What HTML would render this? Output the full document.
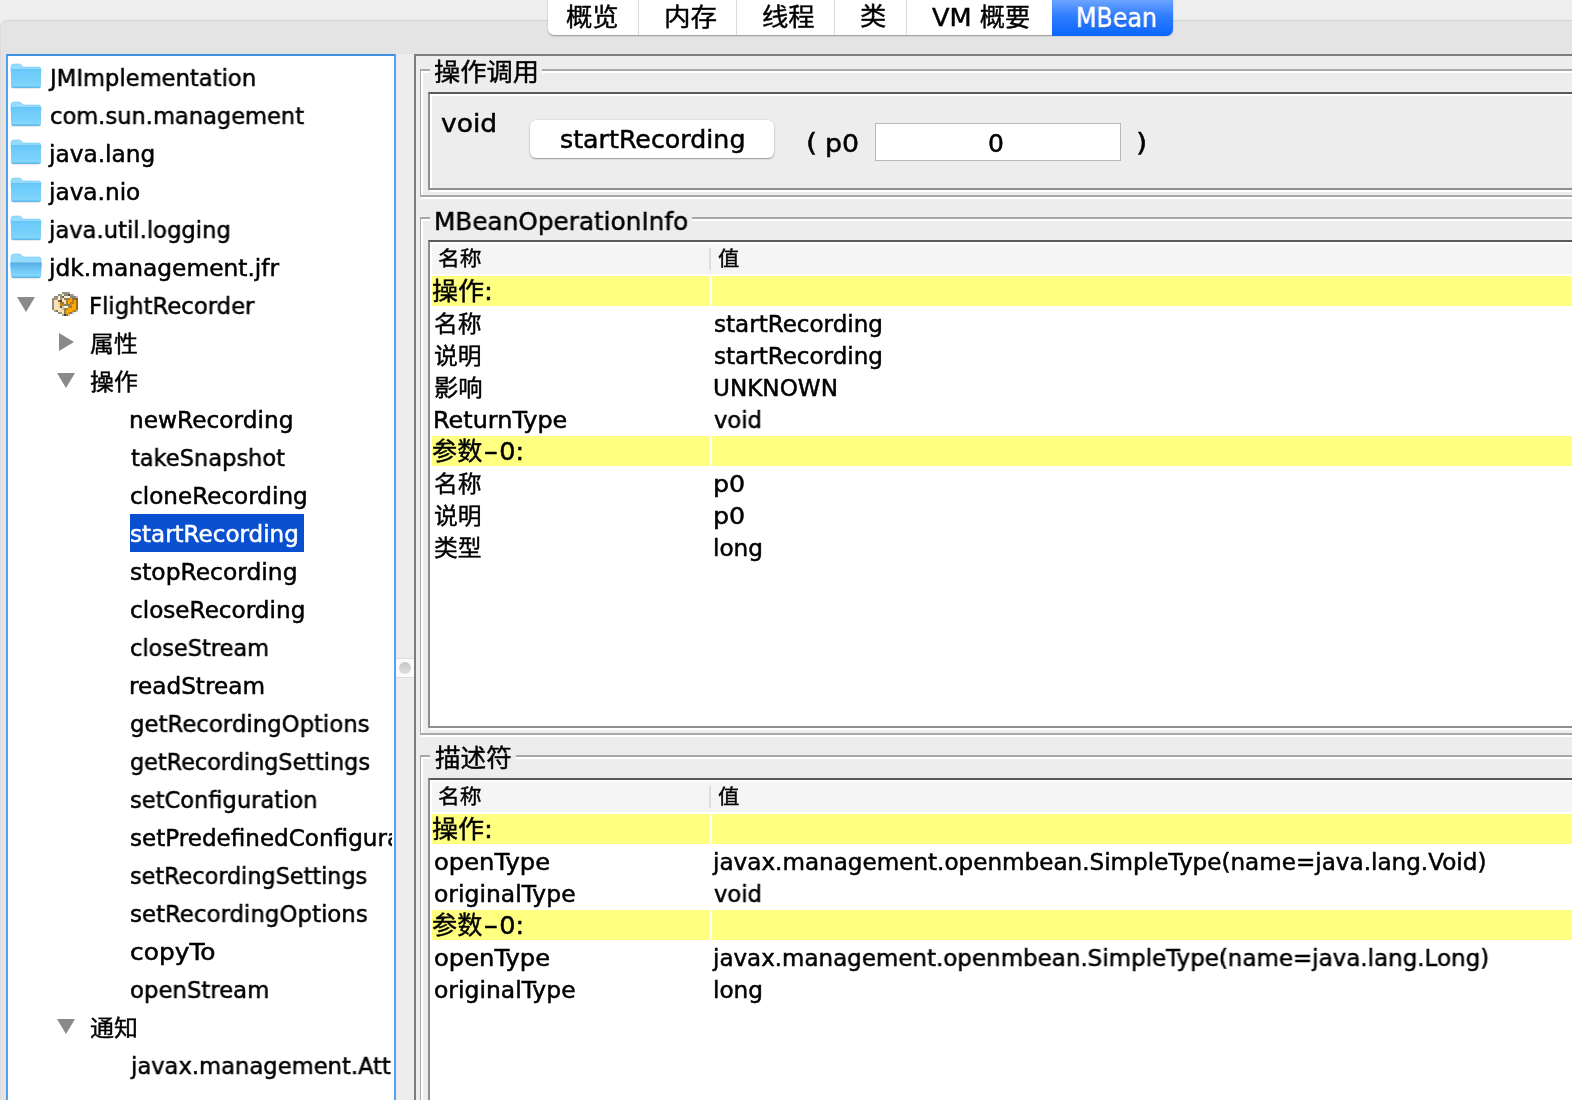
<!DOCTYPE html>
<html lang="zh-CN"><head><meta charset="utf-8"><title>JConsole MBean</title>
<style>
*{box-sizing:border-box;margin:0;padding:0}
html,body{width:1572px;height:1100px;overflow:hidden;background:#eeeeee}
body{position:relative;font-family:"DejaVu Sans", "Liberation Sans", "Noto Sans CJK SC", sans-serif;font-size:23px;color:#000;line-height:1;-webkit-text-stroke:0.5px currentColor}
.a{position:absolute}
.t{position:absolute;white-space:nowrap;will-change:transform;transform-origin:0 0}
.r{height:38px;line-height:38px}
.c{height:32px;line-height:32px}
.tb{height:36px;line-height:36px}
.b{font-size:25px}
.mb{font-size:26.5px}
.h{font-size:21px}
.w{color:#fff}
.d{display:inline-block;transform:scaleX(1.6);margin:0 3.5px 0 4px}
.sh{text-shadow:0 1px 1px rgba(0,0,40,.35)}
.k{font-size:0.985em;-webkit-text-stroke:0.4px currentColor}
.pane{left:0;top:20px;width:1600px;height:1200px;background:#e4e4e4;border:1px solid #d4d4d4;border-left-color:#dcdcdc;border-radius:7px}
.tabs{left:548px;top:-10px;width:625px;height:45px;background:#fff;border-radius:6px;box-shadow:0 1px 1.5px rgba(0,0,0,.35);overflow:hidden}
.tab{position:absolute;top:0;height:46px;border-left:1px solid #dcdcdc}
.sel{background:linear-gradient(#6ba4ff 10px,#2f7dff 26px,#0a66fb 46px);border-radius:0 0 7px 0}
.tree{left:6px;top:54px;width:390px;height:1100px;background:#fff;border:2px solid #55a2ea;border-top-color:#3f91de}
.clip{left:0;top:0;width:384px;height:1100px;overflow:hidden}
.sel2{background:#0950d0}
.div{left:396px;top:54px;width:18px;height:1100px;background:#ededed}
.right{left:414px;top:54px;width:1300px;height:1100px;background:#ededed;border:2px solid #7d7d7d}
.gw{border:2px solid #fff}
.gg{border:solid #a8a8a8;border-width:2px 0 2px 1px}
.gb{position:absolute;background:#ededed;height:6px}
.bw{border:2px solid #fff}
.bx{border:2px solid #8e8e8e;border-top-color:#5a5a5a}
.hdr{background:#f5f5f5}
.y{background:#ffff80}
</style></head>
<body>
<div class="a pane"></div>
<div class="a tabs"><div class="tab" style="left:0px;width:90px;border-left:0;"></div><div class="tab" style="left:90px;width:98px;"></div><div class="tab" style="left:188px;width:98px;"></div><div class="tab" style="left:286px;width:72px;"></div><div class="tab" style="left:358px;width:146px;"></div></div>
<div class="a sel" style="left:1052px;top:-10px;width:121px;height:46px"></div>
<div class="a tree"><div class="a clip">
<svg class="a" style="left:2px;top:7px" width="32" height="27" viewBox="0 0 32 27"><defs><linearGradient id="fg0" x1="0" y1="0" x2="0" y2="1"><stop offset="0" stop-color="#62c2f5"/><stop offset=".08" stop-color="#6bc9f8"/><stop offset=".8" stop-color="#7cd3fb"/><stop offset=".84" stop-color="#90dbfd"/><stop offset=".9" stop-color="#72ccf8"/><stop offset="1" stop-color="#5ab4e6"/></linearGradient></defs><path d="M1 4 Q1 1 4 1 H9 Q10.6 1 11.6 2.2 L13 4 H28.5 Q31 4 31 6.5 V10 H1 Z" fill="#96dbfd" stroke="#74c9f5" stroke-width=".6"/><path d="M1 6.6 Q1 6 1.6 6 H30.4 Q31 6 31 6.6 V23 Q31 25 29 25 H3 Q1 25 1 23 Z" fill="url(#fg0)"/><path d="M2.5 25.6 H29.5" stroke="#000" stroke-opacity=".1" stroke-width="1"/></svg>
<svg class="a" style="left:2px;top:45px" width="32" height="27" viewBox="0 0 32 27"><defs><linearGradient id="fg1" x1="0" y1="0" x2="0" y2="1"><stop offset="0" stop-color="#62c2f5"/><stop offset=".08" stop-color="#6bc9f8"/><stop offset=".8" stop-color="#7cd3fb"/><stop offset=".84" stop-color="#90dbfd"/><stop offset=".9" stop-color="#72ccf8"/><stop offset="1" stop-color="#5ab4e6"/></linearGradient></defs><path d="M1 4 Q1 1 4 1 H9 Q10.6 1 11.6 2.2 L13 4 H28.5 Q31 4 31 6.5 V10 H1 Z" fill="#96dbfd" stroke="#74c9f5" stroke-width=".6"/><path d="M1 6.6 Q1 6 1.6 6 H30.4 Q31 6 31 6.6 V23 Q31 25 29 25 H3 Q1 25 1 23 Z" fill="url(#fg1)"/><path d="M2.5 25.6 H29.5" stroke="#000" stroke-opacity=".1" stroke-width="1"/></svg>
<svg class="a" style="left:2px;top:83px" width="32" height="27" viewBox="0 0 32 27"><defs><linearGradient id="fg2" x1="0" y1="0" x2="0" y2="1"><stop offset="0" stop-color="#62c2f5"/><stop offset=".08" stop-color="#6bc9f8"/><stop offset=".8" stop-color="#7cd3fb"/><stop offset=".84" stop-color="#90dbfd"/><stop offset=".9" stop-color="#72ccf8"/><stop offset="1" stop-color="#5ab4e6"/></linearGradient></defs><path d="M1 4 Q1 1 4 1 H9 Q10.6 1 11.6 2.2 L13 4 H28.5 Q31 4 31 6.5 V10 H1 Z" fill="#96dbfd" stroke="#74c9f5" stroke-width=".6"/><path d="M1 6.6 Q1 6 1.6 6 H30.4 Q31 6 31 6.6 V23 Q31 25 29 25 H3 Q1 25 1 23 Z" fill="url(#fg2)"/><path d="M2.5 25.6 H29.5" stroke="#000" stroke-opacity=".1" stroke-width="1"/></svg>
<svg class="a" style="left:2px;top:121px" width="32" height="27" viewBox="0 0 32 27"><defs><linearGradient id="fg3" x1="0" y1="0" x2="0" y2="1"><stop offset="0" stop-color="#62c2f5"/><stop offset=".08" stop-color="#6bc9f8"/><stop offset=".8" stop-color="#7cd3fb"/><stop offset=".84" stop-color="#90dbfd"/><stop offset=".9" stop-color="#72ccf8"/><stop offset="1" stop-color="#5ab4e6"/></linearGradient></defs><path d="M1 4 Q1 1 4 1 H9 Q10.6 1 11.6 2.2 L13 4 H28.5 Q31 4 31 6.5 V10 H1 Z" fill="#96dbfd" stroke="#74c9f5" stroke-width=".6"/><path d="M1 6.6 Q1 6 1.6 6 H30.4 Q31 6 31 6.6 V23 Q31 25 29 25 H3 Q1 25 1 23 Z" fill="url(#fg3)"/><path d="M2.5 25.6 H29.5" stroke="#000" stroke-opacity=".1" stroke-width="1"/></svg>
<svg class="a" style="left:2px;top:159px" width="32" height="27" viewBox="0 0 32 27"><defs><linearGradient id="fg4" x1="0" y1="0" x2="0" y2="1"><stop offset="0" stop-color="#62c2f5"/><stop offset=".08" stop-color="#6bc9f8"/><stop offset=".8" stop-color="#7cd3fb"/><stop offset=".84" stop-color="#90dbfd"/><stop offset=".9" stop-color="#72ccf8"/><stop offset="1" stop-color="#5ab4e6"/></linearGradient></defs><path d="M1 4 Q1 1 4 1 H9 Q10.6 1 11.6 2.2 L13 4 H28.5 Q31 4 31 6.5 V10 H1 Z" fill="#96dbfd" stroke="#74c9f5" stroke-width=".6"/><path d="M1 6.6 Q1 6 1.6 6 H30.4 Q31 6 31 6.6 V23 Q31 25 29 25 H3 Q1 25 1 23 Z" fill="url(#fg4)"/><path d="M2.5 25.6 H29.5" stroke="#000" stroke-opacity=".1" stroke-width="1"/></svg>
<svg class="a" style="left:2px;top:197px" width="32" height="27" viewBox="0 0 32 27"><defs><linearGradient id="fg5" x1="0" y1="0" x2="0" y2="1"><stop offset="0" stop-color="#57abdf"/><stop offset=".35" stop-color="#68c2f2"/><stop offset=".75" stop-color="#7cd3fb"/><stop offset=".8" stop-color="#8edafd"/><stop offset=".88" stop-color="#72ccf8"/><stop offset="1" stop-color="#5ab4e6"/></linearGradient></defs><path d="M1 4 Q1 1 4 1 H9 Q10.6 1 11.6 2.2 L13 4 H28.5 Q31 4 31 6.5 V14 H1 Z" fill="#96dbfd" stroke="#74c9f5" stroke-width=".6"/><path d="M0.2 10.4 Q0.1 9.4 1.1 9.4 H30.9 Q31.9 9.4 31.8 10.4 L31 23 Q31 25 29 25 H3 Q1 25 1 23 Z" fill="url(#fg5)"/><path d="M2.5 25.6 H29.5" stroke="#000" stroke-opacity=".1" stroke-width="1"/></svg>
<svg class="a" style="left:9px;top:241px" width="18" height="15" viewBox="0 0 18 15"><path d="M0 0 H18 L9 15 Z" fill="#8a8a8a"/></svg>
<svg class="a" style="left:44px;top:236px" width="26" height="24" viewBox="0 0 26 24" shape-rendering="crispEdges"><rect x="10" y="0" width="2" height="2" fill="#9a9486"/><rect x="12" y="0" width="2" height="2" fill="#9a9486"/><rect x="14" y="0" width="2" height="2" fill="#9a9486"/><rect x="16" y="0" width="2" height="2" fill="#a8a49a"/><rect x="6" y="2" width="2" height="2" fill="#8f8f8f"/><rect x="8" y="2" width="2" height="2" fill="#a09a8a"/><rect x="10" y="2" width="2" height="2" fill="#fde9c4"/><rect x="12" y="2" width="2" height="2" fill="#8a8472"/><rect x="14" y="2" width="2" height="2" fill="#8a8472"/><rect x="16" y="2" width="2" height="2" fill="#5a5240"/><rect x="18" y="2" width="2" height="2" fill="#9a9590"/><rect x="20" y="2" width="2" height="2" fill="#a8a49a"/><rect x="2" y="4" width="2" height="2" fill="#8e8a80"/><rect x="4" y="4" width="2" height="2" fill="#8e8a80"/><rect x="6" y="4" width="2" height="2" fill="#fff3dc"/><rect x="8" y="4" width="2" height="2" fill="#a09a8a"/><rect x="10" y="4" width="2" height="2" fill="#5f5a48"/><rect x="12" y="4" width="2" height="2" fill="#fff3dc"/><rect x="14" y="4" width="2" height="2" fill="#fff3dc"/><rect x="16" y="4" width="2" height="2" fill="#fff3dc"/><rect x="18" y="4" width="2" height="2" fill="#8a8578"/><rect x="20" y="4" width="2" height="2" fill="#8a8578"/><rect x="22" y="4" width="2" height="2" fill="#8a8578"/><rect x="24" y="4" width="2" height="2" fill="#c8c8cc"/><rect x="0" y="6" width="2" height="2" fill="#8c8c8c"/><rect x="2" y="6" width="2" height="2" fill="#b09a6a"/><rect x="4" y="6" width="2" height="2" fill="#b09a6a"/><rect x="6" y="6" width="2" height="2" fill="#fff3dc"/><rect x="8" y="6" width="2" height="2" fill="#9a9486"/><rect x="10" y="6" width="2" height="2" fill="#fde3b5"/><rect x="12" y="6" width="2" height="2" fill="#8c8060"/><rect x="14" y="6" width="2" height="2" fill="#8c8060"/><rect x="16" y="6" width="2" height="2" fill="#b87a10"/><rect x="18" y="6" width="2" height="2" fill="#f5a000"/><rect x="20" y="6" width="2" height="2" fill="#8a7040"/><rect x="22" y="6" width="2" height="2" fill="#8a7040"/><rect x="24" y="6" width="2" height="2" fill="#8a5a00"/><rect x="0" y="8" width="2" height="2" fill="#8c8c8c"/><rect x="2" y="8" width="2" height="2" fill="#fbe3b5"/><rect x="4" y="8" width="2" height="2" fill="#fbe3b5"/><rect x="6" y="8" width="2" height="2" fill="#7a6a48"/><rect x="8" y="8" width="2" height="2" fill="#4a4230"/><rect x="10" y="8" width="2" height="2" fill="#fde3b5"/><rect x="12" y="8" width="2" height="2" fill="#fde3b5"/><rect x="14" y="8" width="2" height="2" fill="#a08040"/><rect x="16" y="8" width="2" height="2" fill="#ffa500"/><rect x="18" y="8" width="2" height="2" fill="#ffa500"/><rect x="20" y="8" width="2" height="2" fill="#c88000"/><rect x="22" y="8" width="2" height="2" fill="#ffa800"/><rect x="24" y="8" width="2" height="2" fill="#a06800"/><rect x="0" y="10" width="2" height="2" fill="#8c8c8c"/><rect x="2" y="10" width="2" height="2" fill="#fbe3b5"/><rect x="4" y="10" width="2" height="2" fill="#fbe3b5"/><rect x="6" y="10" width="2" height="2" fill="#e8d8b0"/><rect x="8" y="10" width="2" height="2" fill="#b87800"/><rect x="10" y="10" width="2" height="2" fill="#9a7830"/><rect x="12" y="10" width="2" height="2" fill="#fbe0b0"/><rect x="14" y="10" width="2" height="2" fill="#a08040"/><rect x="16" y="10" width="2" height="2" fill="#ffa500"/><rect x="18" y="10" width="2" height="2" fill="#b88010"/><rect x="20" y="10" width="2" height="2" fill="#b88010"/><rect x="22" y="10" width="2" height="2" fill="#ffa800"/><rect x="24" y="10" width="2" height="2" fill="#a06800"/><rect x="0" y="12" width="2" height="2" fill="#8c8c8c"/><rect x="2" y="12" width="2" height="2" fill="#fbe3b5"/><rect x="4" y="12" width="2" height="2" fill="#fbe3b5"/><rect x="6" y="12" width="2" height="2" fill="#e8d8b0"/><rect x="8" y="12" width="2" height="2" fill="#c88400"/><rect x="10" y="12" width="2" height="2" fill="#c88400"/><rect x="12" y="12" width="2" height="2" fill="#8a8060"/><rect x="14" y="12" width="2" height="2" fill="#8a8060"/><rect x="16" y="12" width="2" height="2" fill="#8a8060"/><rect x="18" y="12" width="2" height="2" fill="#b09050"/><rect x="20" y="12" width="2" height="2" fill="#ffa800"/><rect x="22" y="12" width="2" height="2" fill="#ffa800"/><rect x="24" y="12" width="2" height="2" fill="#a06800"/><rect x="0" y="14" width="2" height="2" fill="#8c8c8c"/><rect x="2" y="14" width="2" height="2" fill="#fbe3b5"/><rect x="4" y="14" width="2" height="2" fill="#fbe3b5"/><rect x="6" y="14" width="2" height="2" fill="#e8d8b0"/><rect x="8" y="14" width="2" height="2" fill="#6a5a38"/><rect x="10" y="14" width="2" height="2" fill="#c8ccd0"/><rect x="12" y="14" width="2" height="2" fill="#fff3dc"/><rect x="14" y="14" width="2" height="2" fill="#fff3dc"/><rect x="16" y="14" width="2" height="2" fill="#8088a0"/><rect x="18" y="14" width="2" height="2" fill="#b07810"/><rect x="20" y="14" width="2" height="2" fill="#ffa800"/><rect x="22" y="14" width="2" height="2" fill="#ffa800"/><rect x="24" y="14" width="2" height="2" fill="#a06800"/><rect x="0" y="16" width="2" height="2" fill="#8c8c8c"/><rect x="2" y="16" width="2" height="2" fill="#fbe3b5"/><rect x="4" y="16" width="2" height="2" fill="#fbe3b5"/><rect x="6" y="16" width="2" height="2" fill="#fbe3b5"/><rect x="8" y="16" width="2" height="2" fill="#fbe3b5"/><rect x="10" y="16" width="2" height="2" fill="#c8b890"/><rect x="12" y="16" width="2" height="2" fill="#8a8270"/><rect x="14" y="16" width="2" height="2" fill="#c08000"/><rect x="16" y="16" width="2" height="2" fill="#ffa800"/><rect x="18" y="16" width="2" height="2" fill="#ffa800"/><rect x="20" y="16" width="2" height="2" fill="#ffa800"/><rect x="22" y="16" width="2" height="2" fill="#ffa800"/><rect x="24" y="16" width="2" height="2" fill="#a06a00"/><rect x="2" y="18" width="2" height="2" fill="#a0a0a0"/><rect x="4" y="18" width="2" height="2" fill="#8a7a58"/><rect x="6" y="18" width="2" height="2" fill="#fbe3b5"/><rect x="8" y="18" width="2" height="2" fill="#fbe3b5"/><rect x="10" y="18" width="2" height="2" fill="#fbe3b5"/><rect x="12" y="18" width="2" height="2" fill="#8a8270"/><rect x="14" y="18" width="2" height="2" fill="#ffa800"/><rect x="16" y="18" width="2" height="2" fill="#ffa800"/><rect x="18" y="18" width="2" height="2" fill="#ffa800"/><rect x="20" y="18" width="2" height="2" fill="#d89000"/><rect x="22" y="18" width="2" height="2" fill="#a07830"/><rect x="24" y="18" width="2" height="2" fill="#c8c8d0"/><rect x="6" y="20" width="2" height="2" fill="#909090"/><rect x="8" y="20" width="2" height="2" fill="#a09a80"/><rect x="10" y="20" width="2" height="2" fill="#fbe3b5"/><rect x="12" y="20" width="2" height="2" fill="#8a8270"/><rect x="14" y="20" width="2" height="2" fill="#ffa800"/><rect x="16" y="20" width="2" height="2" fill="#d89000"/><rect x="18" y="20" width="2" height="2" fill="#9a7838"/><rect x="20" y="20" width="2" height="2" fill="#b8c0d0"/><rect x="10" y="22" width="2" height="2" fill="#a0a0a0"/><rect x="12" y="22" width="2" height="2" fill="#4a4230"/><rect x="14" y="22" width="2" height="2" fill="#9a7020"/><rect x="16" y="22" width="2" height="2" fill="#c0c4d0"/></svg>
<svg class="a" style="left:51px;top:277px" width="15" height="18" viewBox="0 0 15 18"><path d="M0 0 V18 L15 9 Z" fill="#8a8a8a"/></svg>
<svg class="a" style="left:49px;top:317px" width="18" height="15" viewBox="0 0 18 15"><path d="M0 0 H18 L9 15 Z" fill="#8a8a8a"/></svg>
<div class="a sel2" style="left:122px;top:458px;width:174px;height:38px"></div>
<svg class="a" style="left:49px;top:963px" width="18" height="15" viewBox="0 0 18 15"><path d="M0 0 H18 L9 15 Z" fill="#8a8a8a"/></svg>
<div class="t r" style="left:42px;top:3px;transform:scaleX(0.985)">JMImplementation</div>
<div class="t r" style="left:42px;top:41px;transform:scaleX(0.981)">com.sun.management</div>
<div class="t r" style="left:41px;top:79px;transform:scaleX(1.011)">java.lang</div>
<div class="t r" style="left:41px;top:117px;transform:scaleX(1.008)">java.nio</div>
<div class="t r" style="left:41px;top:155px;transform:scaleX(0.986)">java.util.logging</div>
<div class="t r" style="left:41px;top:193px;transform:scaleX(1.014)">jdk.management.jfr</div>
<div class="t r" style="left:81px;top:231px;transform:scaleX(0.989)">FlightRecorder</div>
<div class="t r" style="left:82px;top:269px;transform:scaleX(1.055)"><span class="k">属性</span></div>
<div class="t r" style="left:82px;top:307px;transform:scaleX(1.055)"><span class="k">操作</span></div>
<div class="t r" style="left:121px;top:345px;transform:scaleX(1.012)">newRecording</div>
<div class="t r" style="left:123px;top:383px;transform:scaleX(0.979)">takeSnapshot</div>
<div class="t r" style="left:122px;top:421px;transform:scaleX(1.005)">cloneRecording</div>
<div class="t r w" style="left:122px;top:459px;transform:scaleX(1.001)">startRecording</div>
<div class="t r" style="left:122px;top:497px;transform:scaleX(1.017)">stopRecording</div>
<div class="t r" style="left:122px;top:535px;transform:scaleX(1.006)">closeRecording</div>
<div class="t r" style="left:122px;top:573px;transform:scaleX(0.976)">closeStream</div>
<div class="t r" style="left:121px;top:611px;transform:scaleX(1.007)">readStream</div>
<div class="t r" style="left:122px;top:649px;transform:scaleX(0.992)">getRecordingOptions</div>
<div class="t r" style="left:122px;top:687px;transform:scaleX(0.971)">getRecordingSettings</div>
<div class="t r" style="left:122px;top:725px;transform:scaleX(0.981)">setConfiguration</div>
<div class="t r" style="left:122px;top:763px;transform:scaleX(1.003)">setPredefinedConfiguration</div>
<div class="t r" style="left:122px;top:801px;transform:scaleX(0.970)">setRecordingSettings</div>
<div class="t r" style="left:122px;top:839px;transform:scaleX(0.995)">setRecordingOptions</div>
<div class="t r" style="left:122px;top:877px;transform:scaleX(1.081)">copyTo</div>
<div class="t r" style="left:122px;top:915px;transform:scaleX(0.991)">openStream</div>
<div class="t r" style="left:82px;top:953px;transform:scaleX(1.060)"><span class="k">通知</span></div>
<div class="t r" style="left:123px;top:991px;transform:scaleX(0.985)">javax.management.AttributeChangeNotification</div>
</div></div>
<div class="a div"></div>
<div class="a" style="left:396px;top:658px;width:18px;height:20px;background:#fbfbfb;border-top:1px solid #dcdcdc;border-bottom:1px solid #dcdcdc"></div>
<div class="a" style="left:399px;top:662px;width:12px;height:12px;border-radius:6px;background:linear-gradient(#c6c6c6,#dedede)"></div>
<div class="a right"></div>
<div class="a gw" style="left:421px;top:71px;width:1300px;height:128px"></div><div class="a gg" style="left:420px;top:69px;width:1300px;height:128px"></div><div class="gb" style="left:430px;top:68px;width:112px"></div>
<div class="a bw" style="left:430px;top:94px;width:1300px;height:98px;background:#ededed"></div><div class="a bx" style="left:428px;top:92px;width:1300px;height:98px"></div>
<div class="a" style="left:530px;top:120px;width:244px;height:38px;background:#fff;border-radius:6px;box-shadow:0 1px 1.5px rgba(0,0,0,.35),0 0 0 .5px rgba(0,0,0,.08)"></div>
<div class="a" style="left:875px;top:123px;width:246px;height:38px;background:#fff;border:1px solid #b9b9b9"></div>
<div class="a gw" style="left:421px;top:219px;width:1300px;height:518px"></div><div class="a gg" style="left:420px;top:217px;width:1300px;height:518px"></div><div class="gb" style="left:430px;top:216px;width:262px"></div>
<div class="a bw" style="left:430px;top:242px;width:1300px;height:488px;background:#fff"></div><div class="a bx" style="left:428px;top:240px;width:1300px;height:488px"></div>
<div class="a hdr" style="left:432px;top:244px;width:1200px;height:30px"></div><div class="a" style="left:709px;top:248px;width:2px;height:22px;background:#dedede"></div><div class="a y" style="left:432px;top:276px;width:278px;height:30px"></div><div class="a y" style="left:712px;top:276px;width:900px;height:30px"></div><div class="a y" style="left:432px;top:436px;width:278px;height:30px"></div><div class="a y" style="left:712px;top:436px;width:900px;height:30px"></div>
<div class="a gw" style="left:421px;top:757px;width:1300px;height:545px"></div><div class="a gg" style="left:420px;top:755px;width:1300px;height:545px"></div><div class="gb" style="left:430px;top:754px;width:86px"></div>
<div class="a bw" style="left:430px;top:780px;width:1300px;height:522px;background:#fff"></div><div class="a bx" style="left:428px;top:778px;width:1300px;height:522px"></div>
<div class="a hdr" style="left:432px;top:782px;width:1200px;height:30px"></div><div class="a" style="left:709px;top:786px;width:2px;height:22px;background:#dedede"></div><div class="a y" style="left:432px;top:814px;width:278px;height:30px"></div><div class="a y" style="left:712px;top:814px;width:900px;height:30px"></div><div class="a y" style="left:432px;top:910px;width:278px;height:30px"></div><div class="a y" style="left:712px;top:910px;width:900px;height:30px"></div>
<div class="t tb b" style="left:566px;top:0px;transform:scaleX(1.070)"><span class="k">概览</span></div>
<div class="t tb b" style="left:664px;top:0px;transform:scaleX(1.078)"><span class="k">内存</span></div>
<div class="t tb b" style="left:762px;top:0px;transform:scaleX(1.070)"><span class="k">线程</span></div>
<div class="t tb b" style="left:860px;top:-1px;transform:scaleX(1.068)"><span class="k">类</span></div>
<div class="t tb b" style="left:932px;top:0px;transform:scaleX(1.024)">VM <span class="k">概要</span></div>
<div class="t tb mb w sh" style="left:1076px;top:0px;transform:scaleX(0.898)">MBean</div>
<div class="t c b" style="left:434px;top:57px;transform:scaleX(1.066)"><span class="k">操作调用</span></div>
<div class="t c b" style="left:441px;top:108px;transform:scaleX(1.062)">void</div>
<div class="t c b" style="left:560px;top:124px;transform:scaleX(1.012)">startRecording</div>
<div class="t c b" style="left:806px;top:127px;transform:scaleX(1.150)">(</div>
<div class="t c b" style="left:825px;top:128px;transform:scaleX(1.071)">p0</div>
<div class="t c b" style="left:988px;top:128px;transform:scaleX(1.000)">0</div>
<div class="t c b" style="left:1136px;top:127px;transform:scaleX(1.150)">)</div>
<div class="t c b" style="left:434px;top:206px;transform:scaleX(0.989)">MBeanOperationInfo</div>
<div class="t c b" style="left:435px;top:743px;transform:scaleX(1.041)"><span class="k">描述符</span></div>
<div class="t c h" style="left:438px;top:243px;transform:scaleX(1.055)"><span class="k">名称</span></div>
<div class="t c h" style="left:718px;top:243px;transform:scaleX(1.032)"><span class="k">值</span></div>
<div class="t c b" style="left:432px;top:276px;transform:scaleX(1.057)"><span class="k">操作</span>:</div>
<div class="t c" style="left:434px;top:308px;transform:scaleX(1.050)"><span class="k">名称</span></div>
<div class="t c" style="left:714px;top:308px;transform:scaleX(1.002)">startRecording</div>
<div class="t c" style="left:434px;top:340px;transform:scaleX(1.051)"><span class="k">说明</span></div>
<div class="t c" style="left:714px;top:340px;transform:scaleX(1.002)">startRecording</div>
<div class="t c" style="left:434px;top:372px;transform:scaleX(1.074)"><span class="k">影响</span></div>
<div class="t c" style="left:713px;top:372px;transform:scaleX(1.005)">UNKNOWN</div>
<div class="t c" style="left:433px;top:404px;transform:scaleX(1.040)">ReturnType</div>
<div class="t c" style="left:714px;top:404px;transform:scaleX(0.985)">void</div>
<div class="t c b" style="left:432px;top:436px;transform:scaleX(1.022)"><span class="k">参数</span><span class="d">-</span>0:</div>
<div class="t c" style="left:434px;top:468px;transform:scaleX(1.050)"><span class="k">名称</span></div>
<div class="t c" style="left:713px;top:468px;transform:scaleX(1.100)">p0</div>
<div class="t c" style="left:434px;top:500px;transform:scaleX(1.051)"><span class="k">说明</span></div>
<div class="t c" style="left:713px;top:500px;transform:scaleX(1.100)">p0</div>
<div class="t c" style="left:434px;top:532px;transform:scaleX(1.050)"><span class="k">类型</span></div>
<div class="t c" style="left:713px;top:532px;transform:scaleX(1.007)">long</div>
<div class="t c h" style="left:438px;top:781px;transform:scaleX(1.055)"><span class="k">名称</span></div>
<div class="t c h" style="left:718px;top:781px;transform:scaleX(1.032)"><span class="k">值</span></div>
<div class="t c b" style="left:432px;top:814px;transform:scaleX(1.057)"><span class="k">操作</span>:</div>
<div class="t c" style="left:434px;top:846px;transform:scaleX(1.053)">openType</div>
<div class="t c" style="left:713px;top:846px;transform:scaleX(1.004)">javax.management.openmbean.SimpleType(name=java.lang.Void)</div>
<div class="t c" style="left:434px;top:878px;transform:scaleX(1.020)">originalType</div>
<div class="t c" style="left:714px;top:878px;transform:scaleX(0.985)">void</div>
<div class="t c b" style="left:432px;top:910px;transform:scaleX(1.022)"><span class="k">参数</span><span class="d">-</span>0:</div>
<div class="t c" style="left:434px;top:942px;transform:scaleX(1.053)">openType</div>
<div class="t c" style="left:713px;top:942px;transform:scaleX(0.999)">javax.management.openmbean.SimpleType(name=java.lang.Long)</div>
<div class="t c" style="left:434px;top:974px;transform:scaleX(1.020)">originalType</div>
<div class="t c" style="left:713px;top:974px;transform:scaleX(1.007)">long</div>
</body></html>
